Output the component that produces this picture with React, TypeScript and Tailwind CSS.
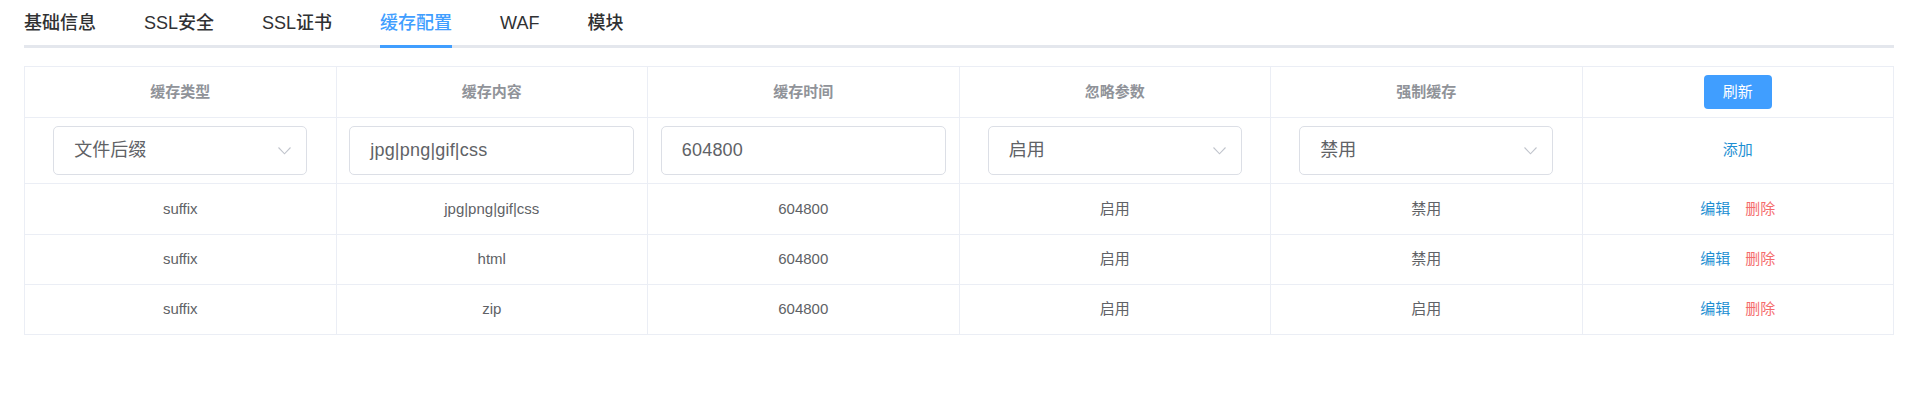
import React from "react";

const tabs = ["基础信息", "SSL安全", "SSL证书", "缓存配置", "WAF", "模块"];
const heads = ["缓存类型", "缓存内容", "缓存时间", "忽略参数", "强制缓存"];

const rows = [
  { type: "suffix", content: "jpg|png|gif|css", time: "604800", ignore: "启用", force: "禁用", h: "h-[51px]" },
  { type: "suffix", content: "html", time: "604800", ignore: "启用", force: "禁用", h: "h-[50px]" },
  { type: "suffix", content: "zip", time: "604800", ignore: "启用", force: "启用", h: "h-[50px]" },
];

const Chevron = () => (
  <svg width="13" height="8" viewBox="0 0 13 8" fill="none">
    <path d="M0.5 0.5 L6.5 6.8 L12.5 0.5" stroke="#c0c4cc" strokeWidth="1.1" />
  </svg>
);

const FakeSelect = ({ value }: { value: string }) => (
  <div className="flex h-[49px] w-[254px] items-center justify-between rounded-[5px] border border-[#dcdfe6] bg-white pl-[20px] pr-[15px] text-[18px] text-[#606266]">
    <span>{value}</span>
    <Chevron />
  </div>
);

const FakeInput = ({ value }: { value: string }) => (
  <div className="flex h-[49px] w-[285px] items-center rounded-[5px] border border-[#dcdfe6] bg-white pl-[20px] text-[18px] tracking-[0.2px] text-[#606266]">
    {value}
  </div>
);

const Cell = ({ children }: { children?: React.ReactNode }) => (
  <div className="flex items-center justify-center border-r border-[#ebeef5]">{children}</div>
);

export default function App() {
  return (
    <div className="h-[416px] w-[1908px] bg-white font-['Liberation_Sans','Noto_Sans_CJK_SC',sans-serif]">
      <div className="ml-[24px] w-[1870px]">
        {/* Tabs */}
        <div className="flex h-[48px] gap-[48px] border-b-[3px] border-[#e4e7ed]">
          {tabs.map((t) => (
            <div
              key={t}
              className={
                t === "缓存配置"
                  ? "-mb-[3px] flex items-center border-b-[3px] border-[#409eff] pt-[2px] text-[18px] font-medium text-[#409eff]"
                  : "flex items-center pt-[2px] text-[18px] font-medium text-[#303133]"
              }
            >
              {t}
            </div>
          ))}
        </div>

        {/* Table */}
        <div className="mt-[18px] border-l border-t border-[#ebeef5]">
          <div className="grid h-[51px] grid-cols-6 border-b border-[#ebeef5] text-[15px] font-bold text-[#909399]">
            {heads.map((h) => (
              <Cell key={h}>{h}</Cell>
            ))}
            <Cell>
              <button className="h-[34px] w-[68px] rounded-[4px] bg-[#409eff] text-[15px] font-normal text-white">
                刷新
              </button>
            </Cell>
          </div>

          <div className="grid h-[66px] grid-cols-6 border-b border-[#ebeef5]">
            <Cell>
              <FakeSelect value="文件后缀" />
            </Cell>
            <Cell>
              <FakeInput value="jpg|png|gif|css" />
            </Cell>
            <Cell>
              <FakeInput value="604800" />
            </Cell>
            <Cell>
              <FakeSelect value="启用" />
            </Cell>
            <Cell>
              <FakeSelect value="禁用" />
            </Cell>
            <Cell>
              <span className="text-[15px] text-[#1e8fd2]">添加</span>
            </Cell>
          </div>

          {rows.map((r, i) => (
            <div key={i} className={`grid ${r.h} grid-cols-6 border-b border-[#ebeef5] text-[15px] text-[#606266]`}>
              <Cell>{r.type}</Cell>
              <Cell>{r.content}</Cell>
              <Cell>{r.time}</Cell>
              <Cell>{r.ignore}</Cell>
              <Cell>{r.force}</Cell>
              <Cell>
                <div className="flex gap-[15px]">
                  <span className="text-[#1e8fd2]">编辑</span>
                  <span className="text-[#f56c6c]">删除</span>
                </div>
              </Cell>
            </div>
          ))}
        </div>
      </div>
    </div>
  );
}
